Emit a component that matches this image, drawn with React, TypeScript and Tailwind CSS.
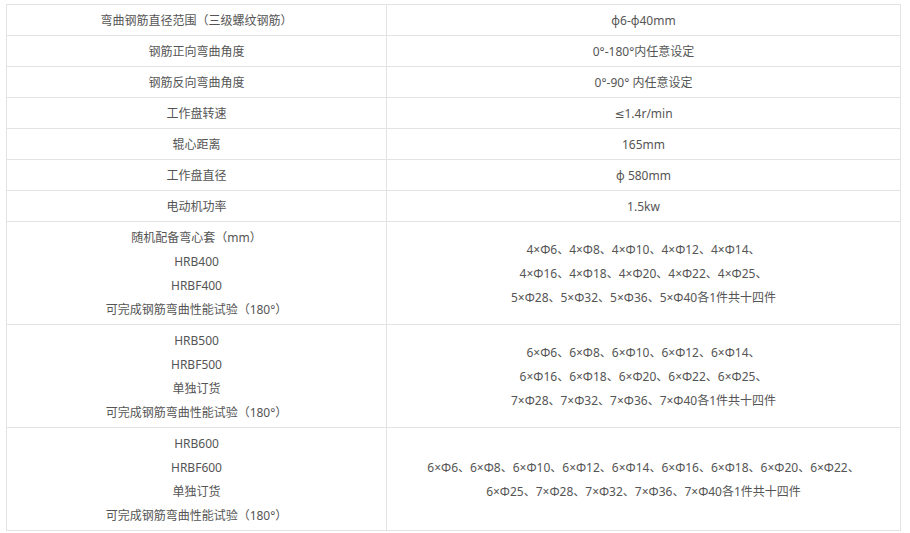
const rows: { left: string[]; right: string[] }[] = [
  { left: ["弯曲钢筋直径范围（三级螺纹钢筋）"], right: ["φ6-φ40mm"] },
  { left: ["钢筋正向弯曲角度"], right: ["0°-180°内任意设定"] },
  { left: ["钢筋反向弯曲角度"], right: ["0°-90° 内任意设定"] },
  { left: ["工作盘转速"], right: ["≤1.4r/min"] },
  { left: ["辊心距离"], right: ["165mm"] },
  { left: ["工作盘直径"], right: ["φ 580mm"] },
  { left: ["电动机功率"], right: ["1.5kw"] },
  {
    left: ["随机配备弯心套（mm）", "HRB400", "HRBF400", "可完成钢筋弯曲性能试验（180°）"],
    right: [
      "4×Φ6、4×Φ8、4×Φ10、4×Φ12、4×Φ14、",
      "4×Φ16、4×Φ18、4×Φ20、4×Φ22、4×Φ25、",
      "5×Φ28、5×Φ32、5×Φ36、5×Φ40各1件共十四件",
    ],
  },
  {
    left: ["HRB500", "HRBF500", "单独订货", "可完成钢筋弯曲性能试验（180°）"],
    right: [
      "6×Φ6、6×Φ8、6×Φ10、6×Φ12、6×Φ14、",
      "6×Φ16、6×Φ18、6×Φ20、6×Φ22、6×Φ25、",
      "7×Φ28、7×Φ32、7×Φ36、7×Φ40各1件共十四件",
    ],
  },
  {
    left: ["HRB600", "HRBF600", "单独订货", "可完成钢筋弯曲性能试验（180°）"],
    right: [
      "6×Φ6、6×Φ8、6×Φ10、6×Φ12、6×Φ14、6×Φ16、6×Φ18、6×Φ20、6×Φ22、",
      "6×Φ25、7×Φ28、7×Φ32、7×Φ36、7×Φ40各1件共十四件",
    ],
  },
];

function Cell({ lines }: { lines: string[] }) {
  return (
    <td className="border border-[#e3e3e3] px-2 pt-[4px] pb-[2px] text-center align-middle">
      {lines.map((l, i) => (
        <div key={i} className="whitespace-nowrap">
          {l}
        </div>
      ))}
    </td>
  );
}

export default function App() {
  return (
    <div className="min-h-screen bg-white pl-[6px] pt-[4px] font-['Noto_Sans','DejaVu_Sans','Noto_Sans_CJK_SC',sans-serif] text-[12px] leading-[24px] text-[#555]">
      <table className="w-[895px] table-fixed border-collapse">
        <colgroup>
          <col className="w-[380px]" />
          <col />
        </colgroup>
        <tbody>
          {rows.map((r, i) => (
            <tr key={i}>
              <Cell lines={r.left} />
              <Cell lines={r.right} />
            </tr>
          ))}
        </tbody>
      </table>
    </div>
  );
}
